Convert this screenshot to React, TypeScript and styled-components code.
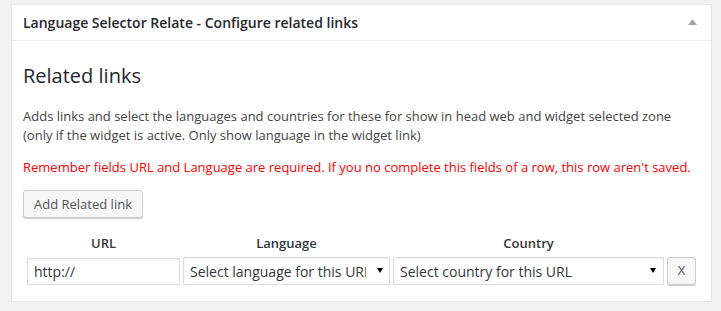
import styled, { createGlobalStyle } from "styled-components";

const GlobalStyle = createGlobalStyle`
  html, body {
    margin: 0;
    padding: 0;
    background: #f1f1f1;
    font-family: "Open Sans", "Liberation Sans", sans-serif;
  }
  * {
    box-sizing: border-box;
  }
`;

const columns = ["URL", "Language", "Country", ""];

export default function App() {
  return (
    <>
      <GlobalStyle />
      <Page>
        <Postbox>
          <Header>
            <Title>Language Selector Relate - Configure related links</Title>
            <Toggle width="9" height="6" viewBox="0 0 9 6">
              <path d="M4.5 0 L9 6 L0 6 Z" fill="#a0a5aa" />
            </Toggle>
          </Header>
          <Inside>
            <Heading>Related links</Heading>
            <Text>
              Adds links and select the languages and countries for these for show in head web and widget selected zone
              (only if the widget is active. Only show language in the widget link)
            </Text>
            <Warning>
              Remember fields URL and Language are required. If you no complete this fields of a row, this row aren't saved.
            </Warning>
            <Actions>
              <Button type="button">Add Related link</Button>
            </Actions>
            <LinksTable>
              <thead>
                <tr>
                  {columns.map((label, i) => (
                    <Th key={i}>{label}</Th>
                  ))}
                </tr>
              </thead>
              <tbody>
                <tr>
                  <Td>
                    <UrlInput type="text" defaultValue="http://" />
                  </Td>
                  <Td>
                    <SelectWrap $width={207} $arrowRight={7}>
                      <Select defaultValue="" $padRight={23}>
                        <option value="">Select language for this URL</option>
                      </Select>
                    </SelectWrap>
                  </Td>
                  <Td>
                    <SelectWrap $width={271} $arrowRight={8}>
                      <Select defaultValue="" $padRight={17}>
                        <option value="">Select country for this URL</option>
                      </Select>
                    </SelectWrap>
                  </Td>
                  <Td>
                    <RemoveButton type="button">X</RemoveButton>
                  </Td>
                </tr>
              </tbody>
            </LinksTable>
          </Inside>
        </Postbox>
      </Page>
    </>
  );
}

const Page = styled.div`
  padding: 4px 10px 0 11px;
`;

const Postbox = styled.div`
  width: 701px;
  background: #fff;
  border: 1px solid #e5e5e5;
  box-shadow: 0 1px 1px rgba(0, 0, 0, 0.04);
`;

const Header = styled.div`
  height: 36px;
  display: flex;
  align-items: center;
  justify-content: space-between;
  padding: 0 14px 0 11px;
  border-bottom: 1px solid #eee;
`;

const Title = styled.h2`
  margin: 0;
  font-size: 14px;
  line-height: 19px;
  font-weight: 600;
  color: #23282d;
`;

const Toggle = styled.svg`
  display: block;
  margin-top: -1px;
`;

const Inside = styled.div`
  padding: 0 11px 16px 11px;
`;

const Heading = styled.h2`
  margin: 22px 0 18px;
  font-size: 20px;
  line-height: 26px;
  font-weight: 400;
  color: #23282d;
`;

const Text = styled.p`
  margin: 0 0 13px;
  font-size: 13px;
  line-height: 19px;
  color: #444;
`;

const Warning = styled(Text)`
  color: #ff0000;
`;

const Actions = styled.div`
  margin-top: 13px;
  margin-bottom: 15px;
`;

const Button = styled.button`
  height: 28px;
  padding: 0 10px 1px;
  font-family: inherit;
  font-size: 13px;
  line-height: 26px;
  color: #555;
  background: #f7f7f7;
  border: 1px solid #ccc;
  border-radius: 3px;
  box-shadow: 0 1px 0 #ccc;
  cursor: pointer;
`;

const LinksTable = styled.table`
  border-collapse: collapse;
  margin-left: 4px;
`;

const Th = styled.th`
  padding: 0 3px 4px 0;
  font-size: 13px;
  line-height: 20px;
  font-weight: 600;
  color: #32373c;
  text-align: center;
`;

const Td = styled.td`
  padding: 0 3px 0 0;
  vertical-align: middle;
`;

const UrlInput = styled.input`
  display: block;
  width: 153px;
  height: 27px;
  margin: 0;
  padding: 0 6px;
  font-family: inherit;
  font-size: 14px;
  color: #32373c;
  border: 1px solid #ddd;
  box-shadow: inset 0 1px 2px rgba(0, 0, 0, 0.07);
  outline: none;
`;

const SelectWrap = styled.div<{ $width: number; $arrowRight: number }>`
  position: relative;
  width: ${(p) => p.$width}px;

  &::after {
    content: "";
    position: absolute;
    right: ${(p) => p.$arrowRight}px;
    top: 11px;
    border-left: 3px solid transparent;
    border-right: 3px solid transparent;
    border-top: 5px solid #000;
    pointer-events: none;
  }
`;

const Select = styled.select<{ $padRight: number }>`
  appearance: none;
  -webkit-appearance: none;
  display: block;
  width: 100%;
  height: 28px;
  margin: 0;
  padding: 0 ${(p) => p.$padRight}px 0 6px;
  font-family: inherit;
  font-size: 14px;
  color: #32373c;
  background: #fff;
  border: 1px solid #ddd;
  border-radius: 0;
  box-shadow: inset 0 1px 2px rgba(0, 0, 0, 0.07);
  outline: none;
`;

const RemoveButton = styled.button`
  display: block;
  width: 29px;
  height: 28px;
  margin: -1px 0 0 0;
  padding: 0 0 2px;
  font-family: inherit;
  font-size: 13px;
  color: #555;
  background: #f7f7f7;
  border: 1px solid #ccc;
  border-radius: 3px;
  box-shadow: 0 1px 0 #ccc;
  cursor: pointer;
`;
